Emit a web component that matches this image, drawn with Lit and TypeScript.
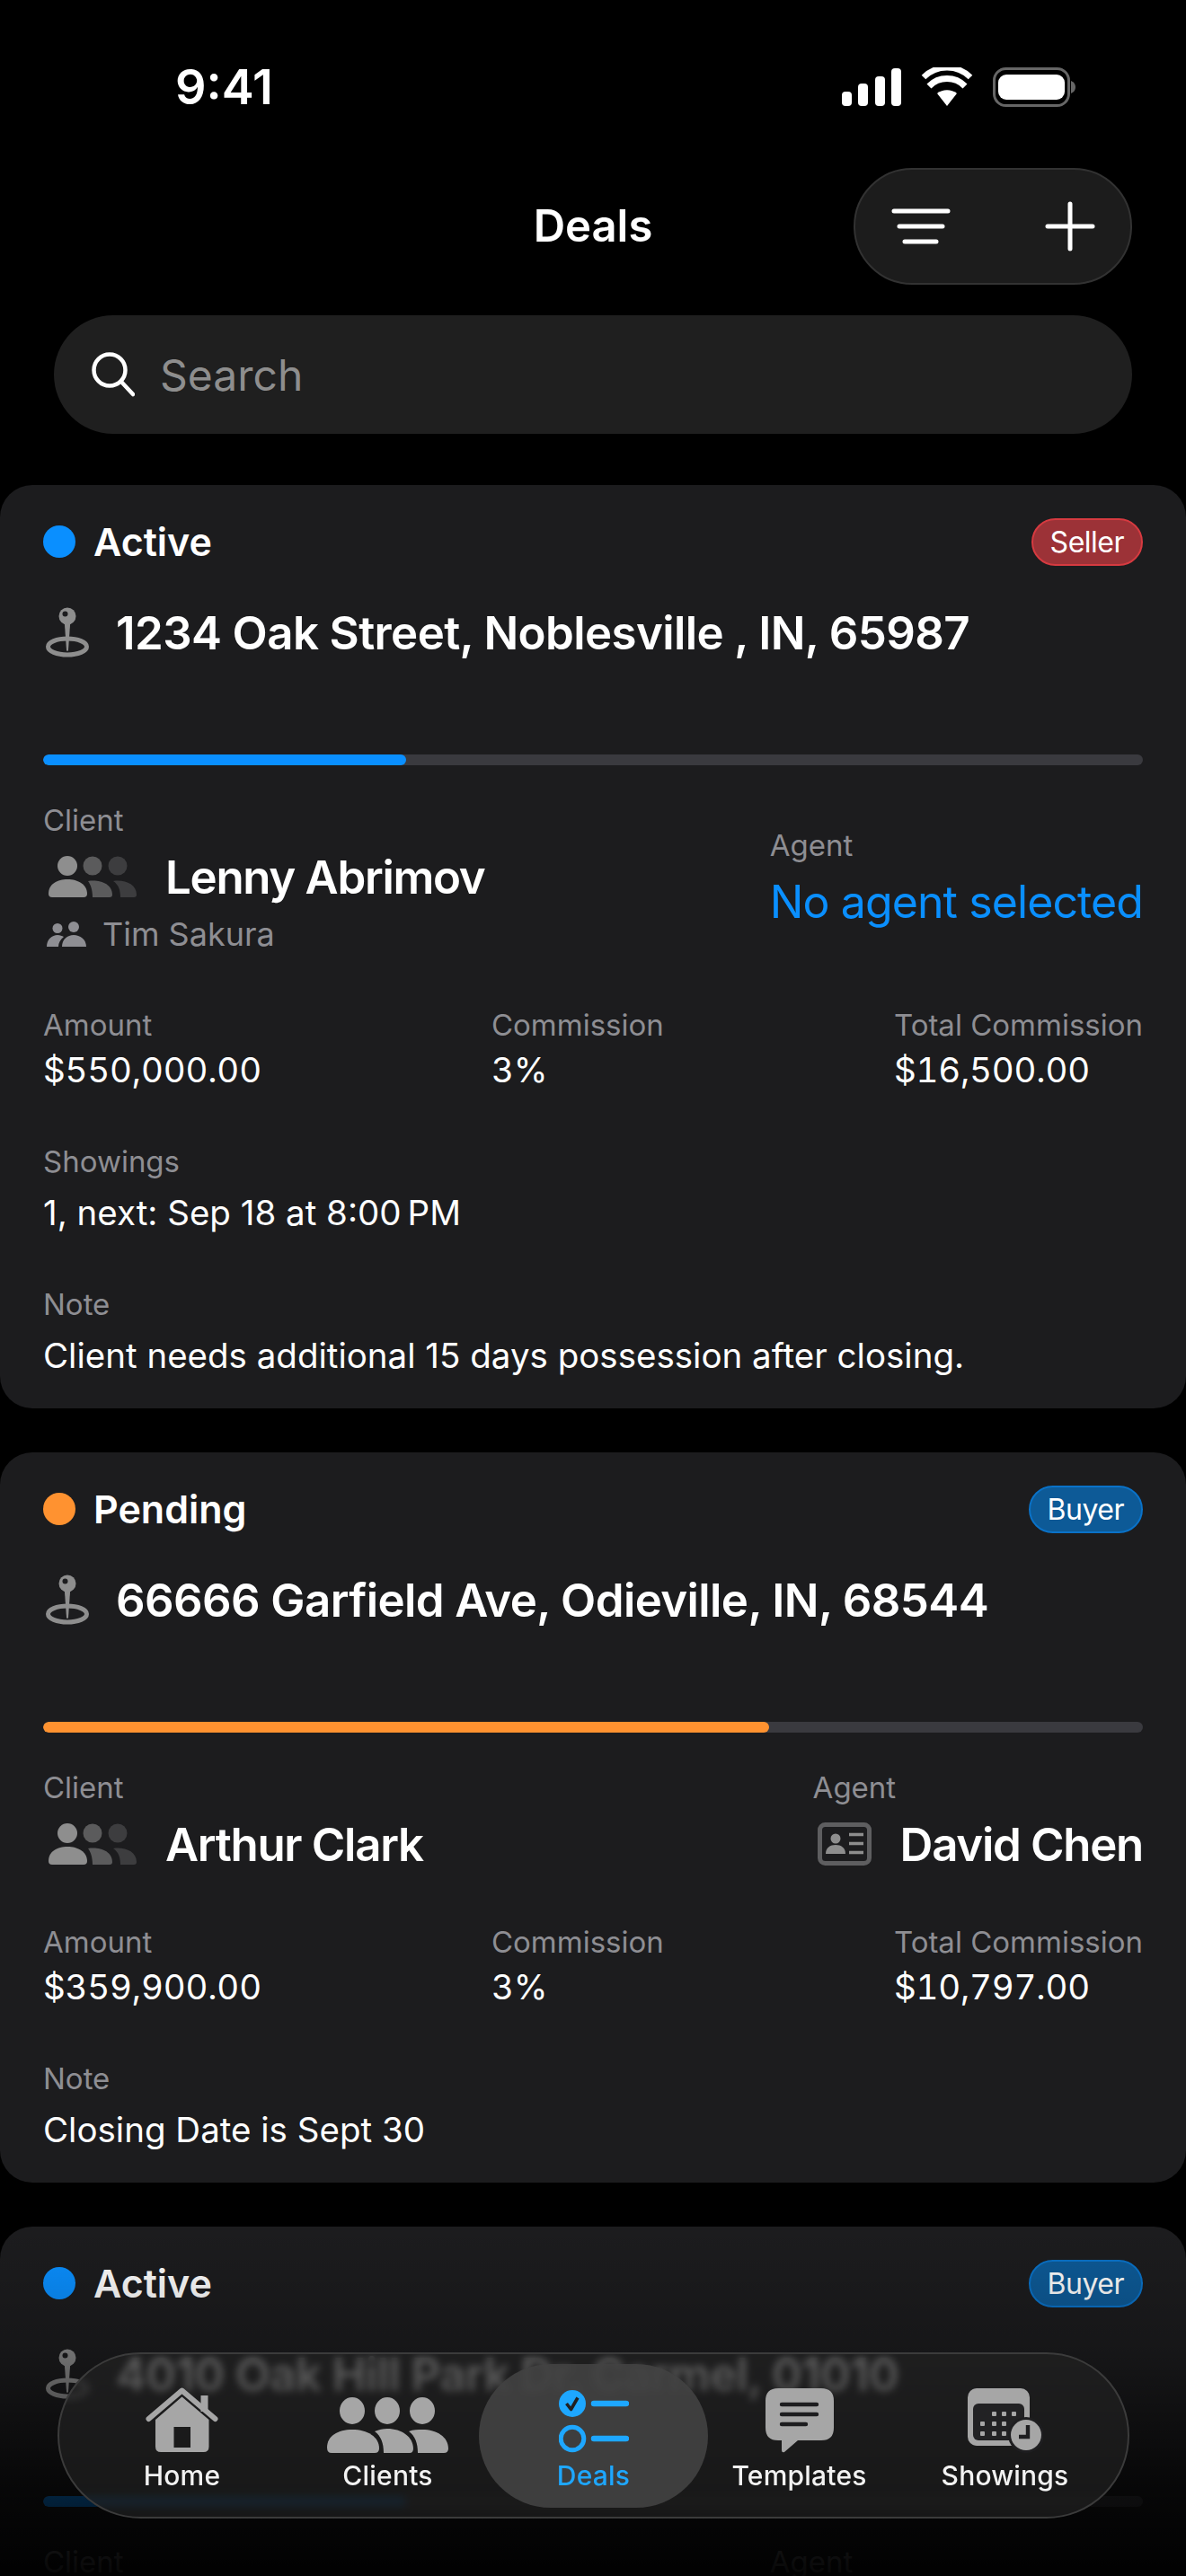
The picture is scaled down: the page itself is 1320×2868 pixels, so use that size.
import { LitElement, html, css, svg, nothing } from "lit";
import { customElement } from "lit/decorators.js";

const pin = html`<svg class="pin" width="50" height="58" viewBox="0 0 50 58" fill="none">
  <ellipse cx="25" cy="45" rx="21.5" ry="9" stroke="#8e8e8e" stroke-width="5"/>
  <path d="M21.5 14 L28.5 14 L26 49 Q25 51 24 49 Z" fill="#8e8e8e"/>
  <circle cx="25" cy="11" r="9.5" fill="#8e8e8e"/>
  <circle cx="22.5" cy="8.5" r="3" fill="#1c1c1e"/>
</svg>`;

const people3 = html`<svg class="ic3" width="98" height="46" viewBox="0 0 98 46">
  <g fill="#3d3d3f"><circle cx="77" cy="11" r="10.5"/><path d="M72 28 C84 26 98 31 98 43 Q98 46 95 46 H80 C80 38 78 32 72 28Z"/></g>
  <g fill="#5b5b5c"><circle cx="49" cy="11" r="10.5"/><path d="M44 28 C57 26 71 31 71 43 Q71 46 68 46 H49 C49 38 47 32 44 28Z"/></g>
  <g fill="#8e8e8e"><circle cx="21" cy="11" r="11"/><path d="M0 42 C0 31 10 26 21 26 C33 26 43 32 43 42 Q43 46 39 46 H4 Q0 46 0 42Z"/></g>
</svg>`;

const people2 = html`<svg class="ic2" width="44" height="28" viewBox="0 0 44 28" fill="#8e8e93">
  <circle cx="12" cy="7.5" r="5.5"/><circle cx="30" cy="6" r="6"/>
  <path d="M0 28 C0 20 6 15 12 15 C15 15 17 16 19 17 C15 20 13 24 13 28Z"/>
  <path d="M17 28 C17 20 23 15 30 15 C37 15 44 20 44 28Z"/>
</svg>`;

const idCard = html`<svg class="idc" width="60" height="48" viewBox="0 0 60 48" fill="none">
  <rect x="2.5" y="2.5" width="55" height="43" rx="6" stroke="#5e5e60" stroke-width="5"/>
  <circle cx="20" cy="18" r="5.5" fill="#8e8e8e"/>
  <path d="M9 35 C9 28 14 25 20 25 C26 25 31 28 31 35Z" fill="#8e8e8e"/>
  <path d="M35 13.5H51M35 23.5H51M35 33.5H51" stroke="#8e8e8e" stroke-width="3.4"/>
</svg>`;

interface Deal {
  status: string; color: string; role: "Seller" | "Buyer"; address: string; pct: number;
  client: string; sub?: string; agent?: string; amount: string; rate: string; total: string;
  showings?: string; note?: string;
}

const deals: Deal[] = [
  { status: "Active", color: "#0a8fff", role: "Seller", address: "1234 Oak Street, Noblesville , IN, 65987", pct: 33,
    client: "Lenny Abrimov", sub: "Tim Sakura", amount: "$550,000.00", rate: "3%", total: "$16,500.00",
    showings: "1, next: Sep 18 at 8:00\u202fPM", note: "Client needs additional 15 days possession after closing." },
  { status: "Pending", color: "#ff9230", role: "Buyer", address: "66666 Garfield Ave, Odieville, IN, 68544", pct: 66,
    client: "Arthur Clark", agent: "David Chen", amount: "$359,900.00", rate: "3%", total: "$10,797.00",
    note: "Closing Date is Sept 30" },
  { status: "Active", color: "#0a8fff", role: "Buyer", address: "4010 Oak Hill Park Dr, Carmel, 01010", pct: 33,
    client: "Maria Lopez", amount: "$410,000.00", rate: "3%", total: "$12,300.00" },
];

const tabIcons = {
  home: html`<svg width="81" height="73" viewBox="0 0 81 73" fill="#a6a6a6">
    <path fill-rule="evenodd" d="M11 36 L40.5 10.5 L70.5 36 V66 Q70.5 72 64.5 72 H17 Q11 72 11 66 Z M31.5 44 V67 H50 V44 Z"/>
    <rect x="61.5" y="9" width="8" height="18"/>
    <path d="M3.5 35 L40.5 3.5 L77.5 35" fill="none" stroke="#a6a6a6" stroke-width="6" stroke-linecap="round" stroke-linejoin="round"/>
  </svg>`,
  clients: html`<svg width="135" height="62" viewBox="0 0 135 62" fill="#a6a6a6">
    <ellipse cx="28" cy="15" rx="14" ry="15"/><ellipse cx="67" cy="15" rx="14" ry="15"/><ellipse cx="106" cy="15" rx="14" ry="15"/>
    <path d="M0 56 C0 43 12 36 28 36 C45 36 58 44 58 57 Q58 62 53 62 H5 Q0 62 0 56Z"/>
    <path d="M53 38 C58 36 62 35 67 35 C83 35 96 44 96 57 Q96 62 92 62 H63 C63 51 60 43 53 38Z"/>
    <path d="M91 38 C96 36 101 36 106 36 C122 36 135 44 135 57 Q135 62 130 62 H101 C101 51 98 43 91 38Z"/>
  </svg>`,
  deals: html`<svg width="78" height="70" viewBox="0 0 78 70" fill="none">
    <circle cx="15" cy="15" r="15" fill="#1ea7ff"/>
    <path d="M8.5 15 L13.5 21.5 L21 8.5" stroke="#202022" stroke-width="3.6" fill="none" stroke-linejoin="round"/>
    <circle cx="15" cy="54" r="12.8" stroke="#1ea7ff" stroke-width="5"/>
    <path d="M39 15H75M39 54H75" stroke="#1ea7ff" stroke-width="6.5" stroke-linecap="round"/>
  </svg>`,
  templates: html`<svg width="76" height="72" viewBox="0 0 76 72">
    <path d="M14 0 H62 Q76 0 76 14 V44 Q76 58 62 58 H36 L21 71 Q18 72 18 69 V58 H14 Q0 58 0 44 V14 Q0 0 14 0Z" fill="#a6a6a6"/>
    <path d="M18 18H57M18 29H57M18 40H45" stroke="#1d1d1f" stroke-width="4.4" stroke-linecap="round"/>
  </svg>`,
  showings: html`<svg width="84" height="72" viewBox="0 0 84 72">
    <rect width="69" height="64" rx="10" fill="#a6a6a6"/>
    <rect x="6" y="17" width="57" height="41" rx="6" fill="#222224"/>
    <g fill="#a6a6a6">
      ${[[27,26],[38,26],[49,26],[14,37],[27,37],[38,37],[14,48],[27,48],[38,48]].map(([x,y]) => svg`<rect x="${x}" y="${y}" width="5" height="5" rx="1"/>`)}
    </g>
    <circle cx="65" cy="52" r="20" fill="#1e1e20"/>
    <circle cx="65" cy="52" r="17" fill="#a6a6a6"/>
    <path d="M67 41 V54 H57" fill="none" stroke="#1e1e20" stroke-width="4.4"/>
  </svg>`,
};

@customElement("app-root")
export class AppRoot extends LitElement {
  static styles = css`
    :host { display: block; position: relative; width: 1320px; height: 2868px; overflow: hidden; background: #000; color: #fff;
      font-family: Inter, "Noto Sans", sans-serif; }
    * { box-sizing: border-box; }
    .status { height: 187px; padding: 7px 123px 0 195px; display: flex; align-items: center; justify-content: space-between; }
    .time { font-size: 54px; font-weight: 600; line-height: 60px; }
    .sys { display: block; }
    .head { display: grid; grid-template-columns: 1fr auto 1fr; align-items: center; height: 130px; padding: 0 60px; }
    .title { grid-column: 2; font-size: 49px; font-weight: 600; line-height: 60px; }
    .actions { grid-column: 3; justify-self: end; width: 310px; height: 130px; border-radius: 65px; background: #1c1c1c; border: 2px solid #323232;
      display: flex; align-items: center; justify-content: space-between; padding: 0 39px 0 40px; }
    .search { margin: 34px 60px 0; height: 132px; border-radius: 66px; background: #1f1f1f; display: flex; align-items: center; padding-left: 42px; gap: 28px;
      font-size: 48px; color: #8e8e8e; }
    .cards { margin-top: 57px; display: flex; flex-direction: column; gap: 49px; }
    .card { background: #1c1c1e; border-radius: 36px; padding: 36px 48px 36px; }
    .row { display: flex; align-items: center; justify-content: space-between; }
    .state { display: flex; align-items: center; gap: 20px; height: 54px; font-size: 43px; font-weight: 600; }
    .dot { width: 36px; height: 36px; border-radius: 50%; }
    .badge { height: 53px; padding: 0 19px; border-radius: 27px; border: 2px solid; font-size: 32px; letter-spacing: -0.5px; display: flex; align-items: center; }
    .Seller { background: #9c3237; border-color: #d63a40; }
    .Buyer { background: #0d5a97; border-color: #0a72c8; }
    .addr { display: flex; align-items: center; height: 60px; margin-top: 44px; font-size: 51px; font-weight: 600; letter-spacing: -0.6px; white-space: nowrap; }
    .pin { margin: 0 29px 0 2px; flex: none; }
    .bar { margin-top: 106px; height: 12px; border-radius: 6px; background: #3a3a3f; overflow: hidden; }
    .fill { height: 100%; border-radius: 6px; }
    .people { display: flex; justify-content: space-between; align-items: center; margin-top: 41px; }
    .lab { font-size: 33px; line-height: 40px; color: #8e8e93; white-space: nowrap; }
    .person { display: flex; align-items: center; height: 60px; margin-top: 13px; font-size: 51px; font-weight: 600; letter-spacing: -1.3px; white-space: nowrap; }
    .ic3 { margin: 0 32px 0 6px; flex: none; }
    .idc { margin: 0 32px 0 5px; flex: none; }
    .sub { display: flex; align-items: center; height: 44px; margin-top: 12px; font-size: 36px; color: #8e8e93; }
    .ic2 { margin: 0 18px 0 4px; }
    .none { font-size: 50px; letter-spacing: -0.9px; color: #0a8fff; line-height: 60px; margin-top: 13px; white-space: nowrap; }
    .stats { display: flex; margin-top: 59px; }
    .stats > div:nth-child(1) { width: 499px; }
    .stats > div:nth-child(2) { width: 448px; }
    .val { font-size: 38.5px; line-height: 46px; margin-top: 7px; white-space: nowrap; }
    .stats .val { font-variant-numeric: tabular-nums; letter-spacing: -0.2px; }
    .block { margin-top: 59px; }
    .block .val { margin-top: 14px; }
    .fade { position: absolute; left: 0; right: 0; top: 2480px; height: 388px; pointer-events: none;
      background: linear-gradient(to bottom, rgba(0,0,0,0), rgba(0,0,0,.2) 35%, rgba(0,0,0,.75) 75%, rgba(0,0,0,.95)); }
    .nav { position: absolute; left: 64px; top: 2619px; width: 1193px; height: 185px; border-radius: 93px; border: 2px solid #3b3b3b;
      background: rgba(36,36,36,.62); backdrop-filter: blur(4.5px); display: flex; padding: 0 22px; }
    .tab { position: relative; flex: 1; display: flex; flex-direction: column; align-items: center; font-size: 30px; font-weight: 500; letter-spacing: 0.2px; color: #f2f2f2; }
    .tab.on { color: #1ea7ff; }
    .tab.on::before { content: ""; position: absolute; left: -13px; right: -13px; top: 11px; height: 160px; border-radius: 80px; background: rgba(66,66,66,.9); }
    .ti { position: relative; height: 76px; margin-top: 34px; display: flex; align-items: flex-end; justify-content: center; }
    .tl { position: relative; line-height: 36px; margin-top: 7px; white-space: nowrap; }
  `;

  private card(d: Deal) {
    return html`<section class="card">
      <div class="row">
        <div class="state"><span class="dot" style="background:${d.color}"></span>${d.status}</div>
        <div class="badge ${d.role}">${d.role}</div>
      </div>
      <div class="addr">${pin}${d.address}</div>
      <div class="bar"><div class="fill" style="width:${d.pct}%;background:${d.color}"></div></div>
      <div class="people">
        <div>
          <div class="lab">Client</div>
          <div class="person">${people3}${d.client}</div>
          ${d.sub ? html`<div class="sub">${people2}${d.sub}</div>` : nothing}
        </div>
        <div>
          <div class="lab">Agent</div>
          ${d.agent ? html`<div class="person">${idCard}${d.agent}</div>` : html`<div class="none">No agent selected</div>`}
        </div>
      </div>
      <div class="stats">
        <div><div class="lab">Amount</div><div class="val">${d.amount}</div></div>
        <div><div class="lab">Commission</div><div class="val">${d.rate}</div></div>
        <div><div class="lab">Total Commission</div><div class="val">${d.total}</div></div>
      </div>
      ${d.showings ? html`<div class="block"><div class="lab">Showings</div><div class="val">${d.showings}</div></div>` : nothing}
      ${d.note ? html`<div class="block"><div class="lab">Note</div><div class="val">${d.note}</div></div>` : nothing}
    </section>`;
  }

  render() {
    const tabs: [keyof typeof tabIcons, string][] = [["home", "Home"], ["clients", "Clients"], ["deals", "Deals"], ["templates", "Templates"], ["showings", "Showings"]];
    return html`
      <div class="status">
        <div class="time">9:41</div>
        <svg class="sys" width="260" height="44" viewBox="0 0 260 44">
          <g fill="#fff">
            <rect x="0" y="27" width="11" height="16" rx="4"/><rect x="18" y="18" width="11" height="25" rx="4"/>
            <rect x="37" y="10" width="11" height="33" rx="4"/><rect x="55" y="1" width="11" height="42" rx="4"/>
            <path d="M117 43 L106 29 A18 18 0 0 1 128 29 Z"/>
          </g>
          <g fill="none" stroke="#fff" stroke-width="7">
            <path d="M97 21 A28 28 0 0 1 137 21"/><path d="M91 11 A37 37 0 0 1 143 11" stroke-width="6.5"/>
          </g>
          <rect x="169.5" y="1.5" width="83" height="41" rx="13" fill="none" stroke="#666" stroke-width="3"/>
          <rect x="174" y="8" width="74" height="28" rx="9" fill="#fff"/>
          <path d="M255 15 Q260 17 260 22 Q260 27 255 29Z" fill="#666"/>
        </svg>
      </div>
      <div class="head">
        <div class="title">Deals</div>
        <div class="actions">
          <svg width="66" height="44" viewBox="0 0 66 44" stroke="#fff" stroke-width="5" stroke-linecap="round" fill="none">
            <path d="M3 5H63M9 22H57M15 39H50"/>
          </svg>
          <svg width="56" height="56" viewBox="0 0 56 56" stroke="#fff" stroke-width="5" stroke-linecap="round" fill="none">
            <path d="M28 3V53M3 28H53"/>
          </svg>
        </div>
      </div>
      <div class="search">
        <svg width="48" height="50" viewBox="0 0 48 50" fill="none" stroke="#fff" stroke-width="4.5" stroke-linecap="round">
          <circle cx="20" cy="20" r="17.5"/><path d="M33 33L46 47"/>
        </svg>
        Search
      </div>
      <div class="cards">${deals.map((d) => this.card(d))}</div>
      <div class="fade"></div>
      <nav class="nav">
        ${tabs.map(([k, l]) => html`<div class="tab ${k === "deals" ? "on" : ""}"><div class="ti">${tabIcons[k]}</div><div class="tl">${l}</div></div>`)}
      </nav>
    `;
  }
}
